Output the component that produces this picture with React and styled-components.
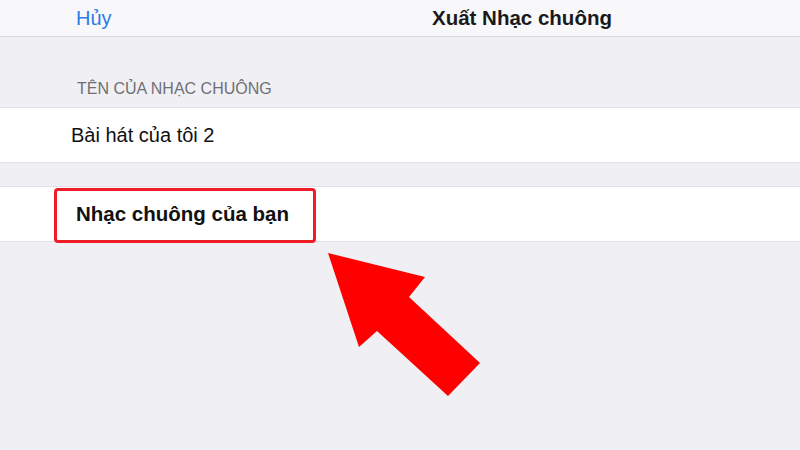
import React from "react";
import styled, { createGlobalStyle } from "styled-components";

const GlobalStyle = createGlobalStyle`
  html, body {
    margin: 0;
    padding: 0;
    background: #efeff4;
  }
  body {
    font-family: "Liberation Sans", Arial, "Noto Sans", sans-serif;
    -webkit-font-smoothing: antialiased;
  }
`;

const Screen = styled.div`
  position: relative;
  width: 800px;
  height: 450px;
  overflow: hidden;
  background: #efeff4;
`;

const NavBar = styled.header`
  display: grid;
  grid-template-columns: 356px auto;
  align-items: center;
  height: 37px;
  padding-left: 76px;
  background: #f8f8fa;
  border-bottom: 1px solid #dcdce0;
  box-sizing: border-box;
`;

const NavButton = styled.button`
  justify-self: start;
  padding: 0;
  border: 0;
  background: none;
  font-family: inherit;
  font-size: 20px;
  line-height: 24px;
  color: #2f7ae5;
  cursor: pointer;
`;

const NavTitle = styled.h1`
  margin: 0;
  font-size: 20.5px;
  line-height: 24px;
  font-weight: 700;
  color: #1a1a1a;
`;

const SectionHeader = styled.div`
  display: flex;
  align-items: flex-end;
  height: 70px;
  padding: 0 0 9px 77px;
  box-sizing: border-box;
  font-size: 16px;
  line-height: 18px;
  color: #6f6f74;
  text-transform: uppercase;
`;

const Group = styled.div`
  margin-top: ${(p) => p.$gap || 0}px;
  background: #fff;
  border-top: 1px solid #e1e1e6;
  border-bottom: 1px solid #e1e1e6;
`;

const Row = styled.div`
  position: relative;
  display: flex;
  align-items: center;
  height: 54px;
  padding-left: ${(p) => p.$inset}px;
  font-size: ${(p) => (p.$strong ? 20.5 : 20)}px;
  font-weight: ${(p) => (p.$strong ? 700 : 400)};
  color: #111;
`;

const Highlight = styled.span`
  position: absolute;
  left: 54px;
  top: 1px;
  width: 262px;
  height: 55px;
  border: 3px solid #ee1c24;
  border-radius: 4px;
  box-sizing: border-box;
  pointer-events: none;
`;

const Pointer = styled.svg`
  position: absolute;
  left: 0;
  top: 0;
  pointer-events: none;
`;

export default function App() {
  return (
    <Screen>
      <GlobalStyle />
      <NavBar>
        <NavButton>Hủy</NavButton>
        <NavTitle>Xuất Nhạc chuông</NavTitle>
      </NavBar>

      <SectionHeader>Tên của nhạc chuông</SectionHeader>
      <Group>
        <Row $inset={71}>Bài hát của tôi 2</Row>
      </Group>

      <Group $gap={23}>
        <Row $inset={76} $strong>
          Nhạc chuông của bạn
          <Highlight />
        </Row>
      </Group>

      <Pointer width="800" height="450" viewBox="0 0 800 450">
        <polygon
          points="328,253 425,277 409,297 480,363 448,396 377,331 359,347"
          fill="#ff0000"
        />
      </Pointer>
    </Screen>
  );
}
